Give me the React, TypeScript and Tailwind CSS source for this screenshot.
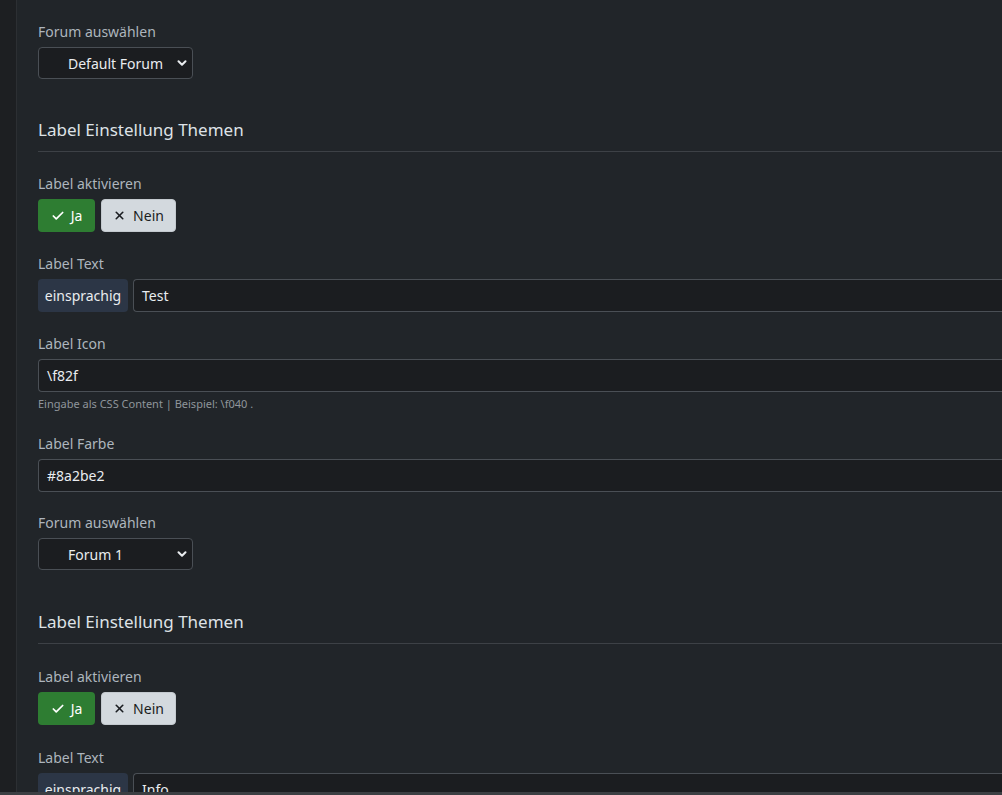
import React from 'react';
import { Check, X, ChevronDown } from 'lucide-react';

const font = { fontFamily: '"Noto Sans", "Open Sans", sans-serif' };

const FieldLabel: React.FC<{ children: React.ReactNode }> = ({ children }) => (
    <div className="text-[14px] leading-[21px] text-[#adb5bd]">{children}</div>
);

const ForumSelect: React.FC<{ value: string }> = ({ value }) => (
    <div>
        <FieldLabel>Forum auswählen</FieldLabel>
        <div className="mt-[5px] w-[155px] h-[32px] flex items-center justify-between pl-[29px] pr-[3px] bg-[#1b1d20] border border-[#4a4f55] rounded-[4px] text-[14px] text-[#e9ecef]">
            <span>{value}</span>
            <ChevronDown className="w-[14px] h-[14px] text-[#e9ecef]" strokeWidth={3.5} />
        </div>
    </div>
);

const TextInput: React.FC<{ value: string }> = ({ value }) => (
    <div className="flex-1 h-[33px] flex items-center px-[8px] bg-[#1b1d20] border border-[#4a4f55] rounded-l-[4px] border-r-0 text-[14px] text-[#e9ecef]">
        {value}
    </div>
);

const ThemeBlock: React.FC<{ text: string; icon?: string; color?: string; forum?: string; cut?: boolean }> = ({ text, icon, color, forum, cut }) => (
    <div>
        <div className={cut ? 'mt-[38px] text-[17px] leading-[27px] text-[#dee2e6]' : 'mt-[37px] text-[17px] leading-[27px] text-[#dee2e6]'}>
            Label Einstellung Themen
        </div>
        <div className="mt-[8px] h-px bg-[#3d4146]" />

        <div className={cut ? 'mt-[22px]' : 'mt-[21px]'}>
            <FieldLabel>Label aktivieren</FieldLabel>
            <div className="mt-[5px] flex gap-[6px]">
                <button className="h-[33px] w-[57px] flex items-center justify-center gap-[6px] bg-[#2e7d32] rounded-[4px] text-[14px] text-white">
                    <Check className="w-[14px] h-[14px]" strokeWidth={3} />
                    Ja
                </button>
                <button className="h-[33px] w-[75px] flex items-center justify-center gap-[7px] bg-[#d3d9de] border border-[#c3c9ce] rounded-[4px] text-[14px] text-[#1a1d21]">
                    <X className="w-[13px] h-[13px]" strokeWidth={3} />
                    Nein
                </button>
            </div>
        </div>

        <div className={cut ? 'mt-[22px]' : 'mt-[21px]'}>
            <FieldLabel>Label Text</FieldLabel>
            <div className="mt-[5px] flex gap-[5px]">
                <div className="h-[33px] w-[90px] flex items-center justify-center bg-[#2c3646] rounded-[4px] text-[14px] text-[#e9ecef]">
                    einsprachig
                </div>
                <TextInput value={text} />
            </div>
        </div>

        {!cut && (
            <>
                <div className="mt-[21px]">
                    <FieldLabel>Label Icon</FieldLabel>
                    <div className="mt-[5px] flex">
                        <TextInput value={icon || ''} />
                    </div>
                    <div className="mt-[4px] text-[11px] leading-[16px] text-[#8f959b]">Eingabe als CSS Content | Beispiel: \f040 .</div>
                </div>

                <div className="mt-[21px]">
                    <FieldLabel>Label Farbe</FieldLabel>
                    <div className="mt-[5px] flex">
                        <TextInput value={color || ''} />
                    </div>
                </div>

                <div className="mt-[20px]">
                    <ForumSelect value={forum || ''} />
                </div>
            </>
        )}
    </div>
);

export default function App() {
    return (
        <div className="h-[795px] w-[1002px] flex flex-col overflow-hidden bg-[#212529]" style={font}>
            <div className="flex-1 flex overflow-hidden">
                {/* left rail */}
                <div className="w-[17px] shrink-0 bg-[#1d1f22] border-r border-[#2c2f33]" />

                <div className="flex-1 pl-[21px] pt-[21px] overflow-hidden">
                    <ForumSelect value="Default Forum" />
                    <ThemeBlock text="Test" icon="\f82f" color="#8a2be2" forum="Forum 1" />
                    <ThemeBlock text="Info" cut />
                </div>
            </div>
            <div className="h-[3px] shrink-0 bg-[#3c3f43]" />
        </div>
    );
}
